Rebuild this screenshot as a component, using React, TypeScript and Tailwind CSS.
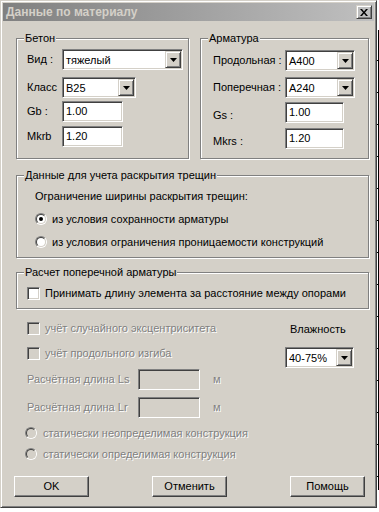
import type { ReactNode } from 'react'

const font = "font-['Liberation_Sans',Arial,sans-serif] text-[11px] leading-none text-black"
const sunken =
  'border border-t-[#808080] border-l-[#808080] border-b-white border-r-white shadow-[inset_1px_1px_0_#404040,inset_-1px_-1px_0_#d4d0c8]'
const raised =
  'border border-t-white border-l-white border-b-[#404040] border-r-[#404040] shadow-[inset_-1px_-1px_0_#808080]'
const arrowRaised =
  'border border-t-[#d4d0c8] border-l-[#d4d0c8] border-b-[#404040] border-r-[#404040] shadow-[inset_1px_1px_0_#fff,inset_-1px_-1px_0_#808080]'
const dim = 'text-[#808080] [text-shadow:1px_1px_0_#ffffff]'

function Group({ title, className, children }: { title: string; className: string; children: ReactNode }) {
  return (
    <div className={`relative border border-[#808080] shadow-[inset_1px_1px_0_#fff,1px_1px_0_#fff] ${className}`}>
      <span className="absolute -top-[6px] left-[7px] bg-[#d4d0c8] px-[1px]">{title}</span>
      {children}
    </div>
  )
}

function Combo({ value, width }: { value: string; width: string }) {
  return (
    <div className={`${sunken} ${width} flex h-[21px] bg-white p-[1px]`}>
      <span className="flex-1 pl-[2px] pt-[4px]">{value}</span>
      <div className={`${arrowRaised} flex h-[17px] w-[16px] items-center justify-center bg-[#d4d0c8]`}>
        <svg width="7" height="4" viewBox="0 0 7 4">
          <polygon points="0,0 7,0 3.5,4" fill="#000" />
        </svg>
      </div>
    </div>
  )
}

function Edit({ value, width, disabled }: { value?: string; width: string; disabled?: boolean }) {
  return (
    <div className={`${sunken} ${width} h-[21px] ${disabled ? 'bg-[#d4d0c8]' : 'bg-white'} pl-[3px] pt-[4px]`}>
      {value}
    </div>
  )
}

function Radio({ checked, disabled }: { checked?: boolean; disabled?: boolean }) {
  return (
    <div className="h-[12px] w-[12px] shrink-0 rounded-full border border-t-[#808080] border-l-[#808080] border-b-white border-r-white">
      <div
        className={`flex h-full w-full items-center justify-center rounded-full border border-t-[#404040] border-l-[#404040] border-b-[#d4d0c8] border-r-[#d4d0c8] ${
          disabled ? 'bg-[#d4d0c8]' : 'bg-white'
        }`}
      >
        {checked ? <div className="h-[4px] w-[4px] rounded-full bg-black" /> : null}
      </div>
    </div>
  )
}

function Check({ disabled }: { disabled?: boolean }) {
  return (
    <div className={`${sunken} h-[13px] w-[13px] shrink-0 ${disabled ? 'bg-[#d4d0c8]' : 'bg-white'}`} />
  )
}

function Btn({ label }: { label: string }) {
  return (
    <div className={`${raised} flex h-[21px] w-[75px] items-center justify-center bg-[#d4d0c8]`}>{label}</div>
  )
}

export default function App() {
  return (
    <div className={`${font} flex min-h-screen bg-white`}>
      <div className="h-[508px] w-[377px] border border-t-[#d4d0c8] border-l-[#d4d0c8] border-b-[#404040] border-r-[#404040] bg-[#d4d0c8] p-[2px] shadow-[inset_1px_1px_0_#fff,inset_-1px_-1px_0_#808080]">
        {/* title bar */}
        <div className="flex h-[18px] items-center justify-between bg-gradient-to-r from-[#808080] to-[#c0c0c0] pl-[3px] pr-[2px]">
          <span className="text-[12px] font-bold text-[#d4d0c8]">Данные по материалу</span>
          <div className={`${arrowRaised} flex h-[14px] w-[16px] items-center justify-center`}>
            <svg width="8" height="7" viewBox="0 0 8 7">
              <path d="M0 0h2l2 2.5L6 0h2L5 3.5 8 7H6L4 4.5 2 7H0l3-3.5z" fill="#000" />
            </svg>
          </div>
        </div>

        <div className="pl-[13px]">
          {/* материалы */}
          <div className="mt-[17px] flex gap-[11px]">
            <Group title="Бетон" className="h-[121px] w-[173px] pl-[10px] pt-[10px]">
              <div className="flex items-center">
                <span className="w-[35px]">Вид :</span>
                <Combo value="тяжелый" width="w-[121px]" />
              </div>
              <div className="mt-[7px] flex items-center">
                <span className="w-[35px]">Класс</span>
                <Combo value="B25" width="w-[74px]" />
              </div>
              <div className="mt-[3px] flex items-center">
                <span className="w-[35px]">Gb :</span>
                <Edit value="1.00" width="w-[61px]" />
              </div>
              <div className="mt-[4px] flex items-center">
                <span className="w-[35px]">Mkrb</span>
                <Edit value="1.20" width="w-[61px]" />
              </div>
            </Group>

            <Group title="Арматура" className="h-[121px] w-[169px] pl-[12px] pt-[11px]">
              <div className="flex items-center">
                <span className="w-[72px]">Продольная :</span>
                <Combo value="A400" width="w-[70px]" />
              </div>
              <div className="mt-[6px] flex items-center">
                <span className="w-[72px]">Поперечная :</span>
                <Combo value="A240" width="w-[70px]" />
              </div>
              <div className="mt-[4px] flex items-center">
                <span className="w-[72px] pt-[6px]">Gs :</span>
                <Edit value="1.00" width="w-[59px]" />
              </div>
              <div className="mt-[5px] flex items-center">
                <span className="w-[72px] pt-[6px]">Mkrs :</span>
                <Edit value="1.20" width="w-[59px]" />
              </div>
            </Group>
          </div>

          {/* трещины */}
          <Group title="Данные для учета раскрытия трещин" className="mt-[16px] h-[83px] w-[353px] pl-[18px] pt-[15px]">
            <div>Ограничение ширины раскрытия трещин:</div>
            <div className="mt-[11px] flex items-center gap-[5px]">
              <Radio checked />
              <span>из условия сохранности арматуры</span>
            </div>
            <div className="mt-[11px] flex items-center gap-[5px]">
              <Radio />
              <span>из условия ограничения проницаемости конструкций</span>
            </div>
          </Group>

          {/* поперечная арматура */}
          <Group title="Расчет поперечной арматуры" className="mt-[14px] h-[37px] w-[353px] pl-[10px] pt-[14px]">
            <div className="flex items-center gap-[5px]">
              <Check />
              <span>Принимать длину элемента за расстояние между опорами</span>
            </div>
          </Group>

          {/* прочее */}
          <div className="mt-[13px] flex w-[353px]">
            <div className={`w-[269px] pl-[11px] ${dim}`}>
              <div className="flex h-[13px] items-center gap-[5px]">
                <Check disabled />
                <span>учёт случайного эксцентриситета</span>
              </div>
              <div className="mt-[12px] flex h-[13px] items-center gap-[5px]">
                <Check disabled />
                <span>учёт продольного изгиба</span>
              </div>
              <div className="mt-[9px] flex items-center">
                <span className="w-[111px]">Расчётная длина Ls</span>
                <Edit width="w-[62px]" disabled />
                <span className="ml-[13px]">м</span>
              </div>
              <div className="mt-[7px] flex items-center">
                <span className="w-[111px]">Расчётная длина Lr</span>
                <Edit width="w-[62px]" disabled />
                <span className="ml-[13px]">м</span>
              </div>
              <div className="ml-[-2px] mt-[9px] flex items-center gap-[6px]">
                <Radio disabled />
                <span>статически неопределимая конструкция</span>
              </div>
              <div className="ml-[-2px] mt-[9px] flex items-center gap-[6px]">
                <Radio disabled />
                <span>статически определимая конструкция</span>
              </div>
            </div>
            <div className="pt-[2px]">
              <div className="pl-[5px]">Влажность</div>
              <div className="mt-[12px]">
                <Combo value="40-75%" width="w-[69px]" />
              </div>
            </div>
          </div>

          {/* кнопки */}
          <div className="ml-[-2px] mt-[16px] flex w-[351px] justify-between">
            <Btn label="OK" />
            <Btn label="Отменить" />
            <Btn label="Помощь" />
          </div>
        </div>
      </div>

      {/* фон за окном */}
      <svg width="2" height="512" viewBox="0 0 2 512" className="shrink-0">
        <rect x="1" y="30" width="1" height="460" fill="#000" />
        {[60, 92, 124, 156, 188, 220, 252, 284, 316, 348, 380, 412, 444, 476].map((y) => (
          <rect key={y} x="0" y={y} width="2" height="1" fill="#000" />
        ))}
      </svg>
    </div>
  )
}
